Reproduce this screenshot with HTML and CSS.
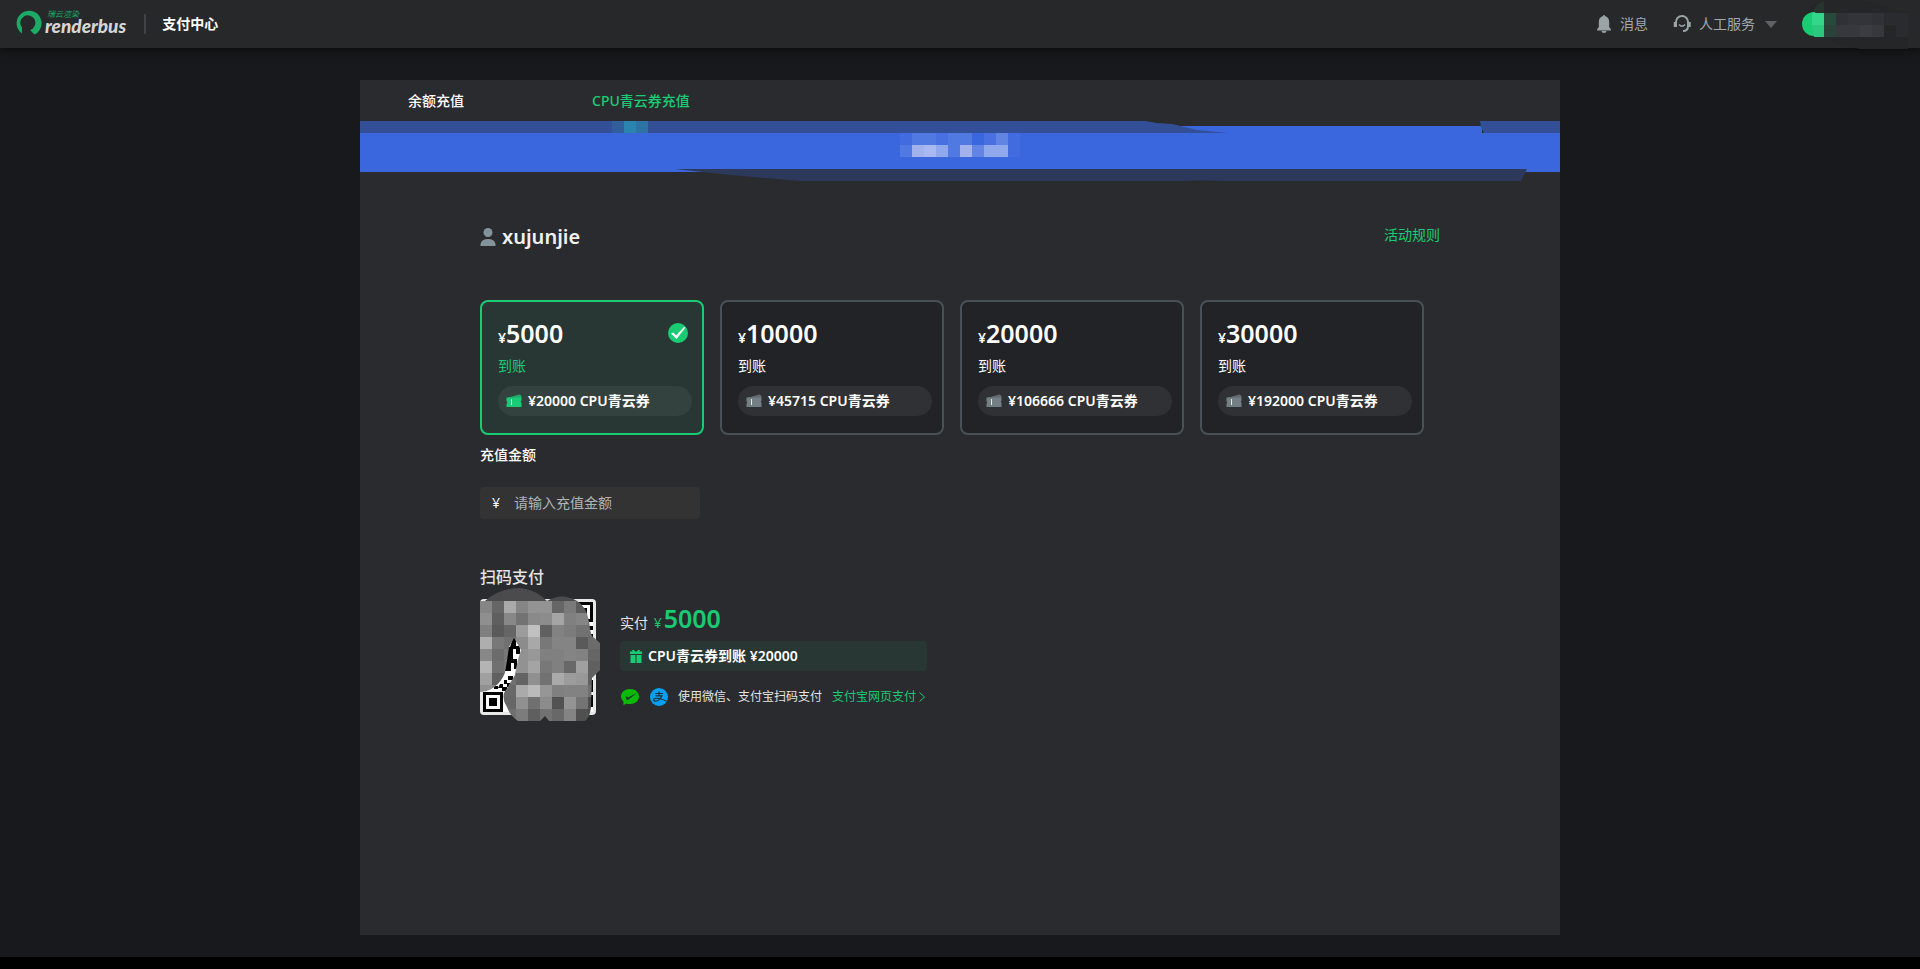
FILE: index.html
```
<!DOCTYPE html>
<html lang="zh-CN">
<head>
<meta charset="utf-8">
<meta name="viewport" content="width=device-width, initial-scale=1">
<title>支付中心</title>
<link rel="stylesheet" href="styles.css">
</head>
<body>
<svg class="defs" aria-hidden="true">
  <symbol id="ticket" viewBox="0 0 16 14">
    <path d="M1 4L13 .5Q15 0 15.300 2L15.500 4z" opacity=".75"/>
    <path fill-rule="evenodd" d="M.500 3.500H15.500V6.500Q14 7.800 15.500 9V13H.500V10Q2 8.500.500 7zM5 5V11H6V5z"/>
    <path d="M5 5h1v6H5z" fill="#dfe5e3"/>
  </symbol>
</svg>
<header class="header">
  <a class="logo" href="#">
    <svg width="26" height="25" viewBox="0 0 26 25" aria-hidden="true"><path d="M6 23.500A12.500 12.500 0 1 1 18.500 24.500L14 20A7.500 7.500 0 1 0 6 17.500z" fill="#1caa66"/></svg>
    <span class="logo-text"><span class="logo-cn">瑞云渲染</span><span class="logo-en">renderbus</span></span>
  </a>
  <h1 class="header-title">支付中心</h1>
  <nav class="header-nav">
    <a class="nav-item" href="#">
      <svg width="16" height="18" viewBox="0 0 16 18" fill="#9aa3a5" aria-hidden="true"><path d="M7 1a1 1 0 0 1 2 0C12 2 13.200 4 13.200 7V12L15 14.500V15.500H1V14.500L2.800 12V7C2.800 4 4 2 7 1zM5.500 16H10.500A2.500 2 0 0 1 5.500 16z"/></svg>
      消息
    </a>
    <button class="nav-item" type="button">
      <svg width="18" height="18" viewBox="0 0 18 18" fill="none" stroke="#9aa3a5" stroke-width="2" aria-hidden="true"><path d="M3 12V7A6 6 0 0 1 15 7V11Q15 16 10 16"/><path d="M2 7V12M16.500 7V12" stroke-width="2.500"/><path d="M6 9.500Q9 13 12 9.500" stroke-width="1.500"/></svg>
      人工服务
      <svg class="caret" width="12" height="7" viewBox="0 0 12 7" fill="#5e6165" aria-hidden="true"><path d="M0 0H12L6 7z"/></svg>
    </button>
    <button class="account" type="button" aria-label="账户">
      <svg width="106" height="49" viewBox="0 0 106 49" aria-hidden="true">
        <path d="M0 25Q4 5 22 0H60L106 12V49H58Q20 43 10 25z" fill="#252628"/>
        <path d="M10 12Q14 4 22 1V13H10z" fill="#28352f"/>
        <path d="M12 12A12 12 0 0 0 12 36H13V12z" fill="#19cb72"/>
        <path d="M10 13h12v12H10z" fill="#34d68b"/><path d="M10 25h12v12H12z" fill="#2cc87e"/>
        <path d="M22 13h12v12H22z" fill="#264b3b"/><path d="M22 25h12v12H22z" fill="#29433a"/>
        <path d="M34 13h12v12H34zM70 13h12v12H70z" fill="#303136"/><path d="M46 13h24v12H46z" fill="#333439"/>
        <path d="M34 25h48v12H34z" fill="#36383e"/><path d="M58 25h12v12H58z" fill="#3a3c42"/>
        <path d="M82 13h24v12H82zM94 25h12v12H94z" fill="#2a2b2e"/>
      </svg>
    </button>
  </nav>
</header>
<main class="page">
  <section class="panel">
    <nav class="tabs">
      <a class="tab" href="#">余额充值</a>
      <a class="tab tab-active" href="#" aria-current="page">CPU青云券充值</a>
    </nav>
    <svg class="banner" viewBox="0 0 1200 60" preserveAspectRatio="none" aria-hidden="true">
      <path d="M0 12H787L818 5H1122V12H1200V51H0z" fill="#3a66de"/>
      <path d="M0 0H785Q798 3 812 3L837 9L868 12H0zM1120 0H1200V12H1124L1121 6z" fill="#334f97"/>
      <path d="M315 48H1167L1161 60H861Q840 59 824 60H440L370 54z" fill="#2d395b"/>
      <path d="M252 0h12v12h-12z" fill="#315f9b"/><path d="M264 0h12v12h-12z" fill="#2a84ae"/><path d="M276 0h12v12h-12z" fill="#2d73a4"/>
      <path d="M540 12h12v12h-12zM648 12h12v24h-12z" fill="#426bdf"/>
      <path d="M552 12h24v12h-24zM588 12h24v12h-24zM540 24h12v12h-12zM588 24h12v12h-12z" fill="#5079e2"/>
      <path d="M576 12h12v12h-12zM624 12h12v12h-12z" fill="#4870e0"/>
      <path d="M636 12h12v12h-12zM612 24h12v12h-12z" fill="#6285e5"/>
      <path d="M552 24h12v12h-12zM600 24h12v12h-12z" fill="#a1b2ed"/><path d="M564 24h12v12h-12z" fill="#a9b8f0"/>
      <path d="M576 24h12v12h-12zM624 24h24v12h-24z" fill="#90a8ec"/>
    </svg>
    <div class="content">
      <div class="user-row">
        <h2 class="user">
          <svg width="16" height="18" viewBox="0 0 16 18" fill="#84929a" aria-hidden="true"><circle cx="8" cy="4.500" r="4.500"/><path d="M.500 18V16Q1.500 11 8 11T15.500 16V18z"/></svg>
          xujunjie
        </h2>
        <a class="link" href="#">活动规则</a>
      </div>
      <form class="form">
        <div class="cards">
          <label class="card">
            <input class="card-radio" type="radio" name="plan" value="5000" checked>
            <span class="price"><small>¥</small>5000</span>
            <svg class="check" width="20" height="20" viewBox="0 0 20 20" aria-hidden="true"><circle cx="10" cy="10" r="10" fill="#19cb72"/><path d="M3 10.500L5.500 9.500L8 12.500L16 4L17.500 4.500L8.500 16z" fill="#fff"/></svg>
            <span class="arrive">到账</span>
            <span class="coupon"><svg class="ticket" width="16" height="14"><use href="#ticket"/></svg>¥20000 CPU青云券</span>
          </label>
          <label class="card">
            <input class="card-radio" type="radio" name="plan" value="10000">
            <span class="price"><small>¥</small>10000</span>
            <span class="arrive">到账</span>
            <span class="coupon"><svg class="ticket" width="16" height="14"><use href="#ticket"/></svg>¥45715 CPU青云券</span>
          </label>
          <label class="card">
            <input class="card-radio" type="radio" name="plan" value="20000">
            <span class="price"><small>¥</small>20000</span>
            <span class="arrive">到账</span>
            <span class="coupon"><svg class="ticket" width="16" height="14"><use href="#ticket"/></svg>¥106666 CPU青云券</span>
          </label>
          <label class="card">
            <input class="card-radio" type="radio" name="plan" value="30000">
            <span class="price"><small>¥</small>30000</span>
            <span class="arrive">到账</span>
            <span class="coupon"><svg class="ticket" width="16" height="14"><use href="#ticket"/></svg>¥192000 CPU青云券</span>
          </label>
        </div>
        <label class="amount-label" for="amount">充值金额</label>
        <div class="amount"><span>¥</span><input id="amount" type="text" inputmode="numeric" placeholder="请输入充值金额"></div>
      </form>
      <h3 class="scan-title">扫码支付</h3>
      <div class="pay">
        <svg class="qr" width="120" height="134" viewBox="0 0 120 134" role="img" aria-label="二维码">
          <defs><clipPath id="blob"><path d="M0 13H97Q106 18 109 33Q110 44 112 48L120 55V82L112 90L111 119Q110 129 105 133H69L65 128L60 133H38Q30 128 27 119Q22 112 24 105L35 87Q37 73 41 62L34 50L29 59Q27 73 25 85Q17 103 0 104z"/></clipPath></defs>
          <rect y="11" width="116" height="116" rx="4" fill="#e8e8e8"/>
          <path d="M3 14h110v110H3z" fill="#fff"/>
          <path d="M93 14h20v20H93z"/><path d="M96 17h14v14H96z" fill="#fff"/><path d="M99 20h8v8h-8z"/>
          <path d="M3 104h20v20H3z"/><path d="M6 107h14v14H6z" fill="#fff"/><path d="M9 110h8v8H9z"/>
          <path d="M33 50h3v8h4v8h-4v-5h-3v10h4v10h-3v-6h-3v8h-6V59h5zM28 88h5v4h-5zM24 92h3v3h4v4h-4v-3h-3zM20 96h3v3h4v4h-5v-3h-4zM14 98h4v3h-4zM109 38h4v4h-4zM111 46h2v3h-2zM111 92h2v12h-2zM111 107h2v12h-2z"/>
          <path d="M5 13Q20 0 40 0Q55 1 67 13Q82 4 97 13z" fill="#4b4b4e"/>
          <g id="mosaic" clip-path="url(#blob)"></g>
        </svg>
        <div class="pay-info">
          <p class="pay-total">实付 <span class="pay-sum"><small>¥</small>5000</span></p>
          <p class="gift">
            <svg width="12" height="13" viewBox="0 0 12 13" fill="#19cb72" aria-hidden="true"><path d="M0 1.500H2.500L2 0H4L5 1.500H7L8 0H10L9.500 1.500H12V4H0zM.500 5H5.500V13H.500zM6.500 5H11.500V13H6.500z"/></svg>
            CPU青云券到账 ¥20000
          </p>
          <p class="methods">
            <svg width="20" height="18" viewBox="0 0 20 18" aria-hidden="true"><path d="M10 1C15 1 19 4 19 8.500S15 16 10 16Q8 16 6.500 15.500L3.500 17V13.800Q1 11.500 1 8.500C1 4 5 1 10 1z" fill="#09bb07"/><path d="M5.500 8L8 9.500L17.500 4.500L8 12Q7 12.500 6.500 11.500z" fill="#22382c"/></svg>
            <svg width="18" height="18" viewBox="0 0 18 18" aria-hidden="true"><circle cx="9" cy="9" r="9" fill="#06a0f5"/><path d="M5 5.500H13M9 3.500V7.500M5.500 7.800H12Q11 10.500 8 12.500Q4 14 3.500 12C3.500 9.500 8 9.500 16.500 13" fill="none" stroke="#263039" stroke-width="1.200"/></svg>
            <span>使用微信、支付宝扫码支付</span>
            <a class="link" href="#">支付宝网页支付<svg width="6" height="10" viewBox="0 0 6 10" fill="none" stroke="#19cb72" aria-hidden="true"><path d="M.500.500L5.500 5L.500 9.500"/></svg></a>
          </p>
        </div>
      </div>
    </div>
  </section>
</main>
<script src="mosaic.js"></script>
</body>
</html>
```
FILE: mosaic.js
```
// Grey levels of the 12px tiles that cover the payment code, row by row.
const rows = [
  "85 66 aa 85 93 93 66 7a 5c 70",
  "8f 5f 88 73 8a 8c a5 80 85 70",
  "80 5a 66 9c c0 60 82 7c 72 70",
  "ae 78 70 8c a8 78 84 84 5a 6c",
  "88 6c 78 92 98 80 80 84 82 66",
  "b4 70 78 92 a4 78 80 68 a0 60",
  "a0 60 70 64 90 72 aa 9c 98 60",
  "90 80 68 aa ba 96 80 82 82 70",
  "90 80 66 90 70 8c 52 94 74 4c",
  "90 80 70 7c 5f 72 68 84 50 4c"
];
const group = document.getElementById("mosaic");
rows.forEach((row, y) => row.split(" ").forEach((level, x) => {
  const tile = document.createElementNS("http://www.w3.org/2000/svg", "rect");
  tile.setAttribute("x", x * 12);
  tile.setAttribute("y", 13 + y * 12);
  tile.setAttribute("width", 12);
  tile.setAttribute("height", 12);
  tile.setAttribute("fill", "#" + level.repeat(3));
  group.append(tile);
}));
```
FILE: styles.css
```
* { box-sizing: border-box; }
body {
  margin: 0;
  min-height: 100vh;
  display: flex;
  flex-direction: column;
  background: #000;
  color: #fff;
  font: 14px/20px "Noto Sans", "Noto Sans CJK SC", sans-serif;
}
h1, h2, h3, p { margin: 0; }
a { color: inherit; text-decoration: none; }
button { padding: 0; border: 0; background: none; color: inherit; font: inherit; }
svg { display: block; flex: none; }
.defs { position: absolute; width: 0; height: 0; }

.header {
  position: relative;
  display: flex;
  align-items: center;
  height: 48px;
  padding: 0 12px 0 16px;
  background: #27282a;
  box-shadow: 0 2px 10px rgba(0, 0, 0, .6);
}
.logo { display: flex; align-items: center; gap: 3px; padding-bottom: 4px; }
.logo-text { display: flex; flex-direction: column; font-style: italic; font-weight: 700; }
.logo-cn { padding-left: 2px; color: #1caa66; font-size: 8px; line-height: 8px; font-weight: 400; }
.logo-en { color: #d5d5d5; font-family: Lato, sans-serif; font-size: 19px; line-height: 16px; font-weight: 900; }
.header-title {
  margin-left: 18px;
  padding-left: 16px;
  border-left: 2px solid #404247;
  font-size: 14px;
  line-height: 20px;
  font-weight: 700;
}
.header-nav { display: flex; align-items: center; margin-left: auto; color: #a0a9b2; }
.nav-item { display: flex; align-items: center; gap: 8px; margin-right: 25px; }
.caret { margin-left: 2px; }
.account { align-self: flex-start; }

.page {
  flex: 1;
  display: flex;
  justify-content: center;
  margin-bottom: 12px;
  padding: 32px 20px 22px;
  background: #17191c;
}
.panel { width: 100%; max-width: 1200px; background: #2a2b2e; }
.tabs { display: flex; align-items: center; gap: 128px; height: 41px; padding-left: 48px; }
.tab { font-weight: 500; }
.tab-active { color: #19cb72; }
.banner { width: 100%; height: 60px; }
.content { padding: 40px 120px 32px; }
.user-row { display: flex; align-items: flex-start; justify-content: space-between; height: 32px; }
.user { display: flex; align-items: center; gap: 6px; color: #f0f2f2; font-size: 20px; line-height: 32px; font-weight: 600; }
.link { color: #19cb72; }
.user-row .link { padding-top: 4px; }

.cards { display: grid; grid-template-columns: repeat(auto-fill, 224px); gap: 16px; margin-top: 47px; }
.card {
  position: relative;
  display: flex;
  flex-direction: column;
  padding: 15px 10px 17px 16px;
  border: 2px solid #485157;
  border-radius: 8px;
  background: #222327;
}
.card:has(:checked) { border-color: #19cb72; background: #283734; }
.card-radio { position: absolute; opacity: 0; margin: 0; }
.price { height: 32px; font-size: 25px; line-height: 32px; font-weight: 600; }
.price small { font-size: 14px; }
.check { position: absolute; top: 21px; right: 14px; }
.arrive { margin: 7px 0 10px; }
.card:has(:checked) .arrive { color: #19cb72; }
.coupon {
  display: flex;
  align-items: center;
  gap: 6px;
  height: 30px;
  padding-left: 8px;
  border-radius: 15px;
  background: #303134;
  font-weight: 600;
}
.card:has(:checked) .coupon { background: #34423f; }
.ticket { fill: #747f85; }
.card:has(:checked) .ticket { fill: #19cb72; }

.amount-label { display: block; margin: 10px 0 22px; font-weight: 500; }
.amount { display: flex; align-items: center; gap: 14px; width: 220px; height: 32px; padding: 0 12px; border-radius: 4px; background: #333334; }
.amount input { flex: 1; min-width: 0; padding: 0; border: 0; outline: 0; background: none; color: #fff; font: inherit; }
.amount input::placeholder { color: #b0b3b5; opacity: 1; }
.scan-title { margin-top: 47px; color: #e4e4e4; font-size: 16px; line-height: 22px; font-weight: 500; }
.pay { display: flex; gap: 20px; }
.pay-info { width: 307px; padding-top: 14px; }
.pay-total { height: 32px; color: #e4e4e4; line-height: 32px; }
.pay-sum { margin-left: 2px; color: #19cb72; font-size: 25px; font-weight: 600; }
.pay-sum small { margin-right: 2px; font-size: 14px; font-weight: 400; }
.gift {
  display: flex;
  align-items: center;
  gap: 6px;
  height: 30px;
  margin: 7px 0 16px;
  padding-left: 10px;
  border-radius: 4px;
  background: #283734;
  font-weight: 600;
}
.methods { display: flex; align-items: center; gap: 10px; color: #e4e4e4; font-size: 12px; white-space: nowrap; }
.methods .link { display: flex; align-items: center; gap: 3px; }
```
